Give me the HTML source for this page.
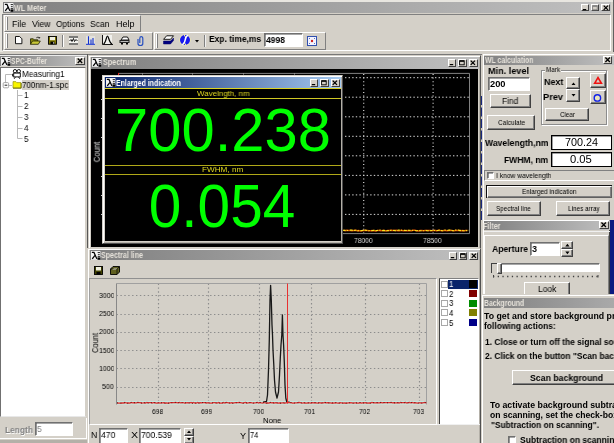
<!DOCTYPE html>
<html>
<head>
<meta charset="utf-8">
<title>WL Meter</title>
<style>
html,body{margin:0;padding:0;}
body{width:614px;height:443px;overflow:hidden;background:#d4d0c8;position:relative;font-family:"Liberation Sans",sans-serif;font-size:8.5px;color:#000;}
div,span{position:absolute;box-sizing:border-box;}
.t{white-space:nowrap;line-height:10px;height:10px;will-change:transform;}
.raised{border:1px solid;border-color:#fff #808080 #808080 #fff;background:#d4d0c8;}
.btn{border:1px solid;border-color:#fff #404040 #404040 #fff;background:#d4d0c8;box-shadow:inset -1px -1px 0 #808080;}
.inp{border:1px solid;border-color:#707070 #fff #fff #707070;background:#fff;box-shadow:inset 0.6px 0.6px 0 #505050;}
.tg{background:linear-gradient(90deg,#808080,#c0c0c0);}
.tb{background:linear-gradient(90deg,#0a246a,#a6caf0);}
.cb{border:1px solid;border-color:#fff #404040 #404040 #fff;background:#d4d0c8;}
.chk{border:1px solid;border-color:#707070 #fff #fff #707070;background:#fff;box-shadow:inset 0.6px 0.6px 0 #505050;}
.win{border:1px solid;border-color:#d4d0c8 #505050 #505050 #d4d0c8;background:#d4d0c8;box-shadow:inset 1px 1px 0 #fff,inset -1px -1px 0 #b4b0a8;}
svg{position:absolute;overflow:visible;}
</style>
</head>
<body>

<!-- main title -->
<div style="left:0;top:0;width:614px;height:2px;background:#e8e6e0;"></div><div style="left:0;top:0;width:2.5px;height:52px;background:#e8e6e0;"></div><div style="left:612.6px;top:0;width:1.4px;height:52px;background:#606060;"></div>
<div class="tg" style="left:2.8px;top:2.3px;width:607.8px;height:10.4px;"></div>
<svg style="left:3.8px;top:3px;" width="9.4" height="8.8" viewBox="0 0 9 10" preserveAspectRatio="none"><rect width="9" height="10" fill="#f4f4f4"/><path d="M0.8 1.6 L2.8 1.6 L5.6 9 M3.9 4.8 L1.2 9" stroke="#000" stroke-width="1.25" fill="none"/><path d="M6.4 1.8 h2.2 M6.6 4.2 h1.8 M6.4 6.4 h2.2" stroke="#000" stroke-width="0.9"/><rect x="6.2" y="7.3" width="2.8" height="2.7" fill="#000"/></svg>
<span class="t" style="left:13.87px;top:2.8px;font-size:8.3px;font-weight:bold;color:#e6e2da;transform-origin:0 50%;transform:scaleX(0.87);">WL Meter</span>
<div class="cb" style="left:580.8px;top:3.6px;width:8px;height:7.8px;"></div><div class="cb" style="left:590.6px;top:3.6px;width:8.5px;height:7.8px;"></div><div class="cb" style="left:601.1px;top:3.6px;width:9.4px;height:7.8px;"></div><svg style="left:580.8px;top:3.6px;" width="30" height="8"><path d="M1.8 5.6 H5.2" stroke="#000" stroke-width="1.2"/><rect x="11.6" y="1.8" width="4.6" height="4" fill="none" stroke="#808080" stroke-width="0.9"/><path d="M11.6 2.1 H16.2" stroke="#808080" stroke-width="1.4"/><path d="M22.7 1.6 L27 5.9 M27 1.6 L22.7 5.9" stroke="#000" stroke-width="1.3"/></svg>
<!-- menu and toolbars -->
<div style="left:2px;top:13.5px;width:608.7px;height:37.5px;border:1px solid;border-color:#808080 #fff #fff #808080;"></div>
<div class="raised" style="left:4px;top:15px;width:137px;height:17px;"></div>
<div style="left:6px;top:17px;width:2px;height:13px;border-left:1px solid #fff;border-right:1px solid #808080;"></div>
<span class="t" style="left:12.48px;top:18.8px;font-size:9px;transform-origin:0 50%;transform:scaleX(0.97);">File</span>
<span class="t" style="left:32.08px;top:18.8px;font-size:9px;transform-origin:0 50%;transform:scaleX(0.96);">View</span>
<span class="t" style="left:56.31px;top:18.8px;font-size:9px;transform-origin:0 50%;transform:scaleX(0.92);">Options</span>
<span class="t" style="left:90.49px;top:18.8px;font-size:9px;transform-origin:0 50%;transform:scaleX(0.95);">Scan</span>
<span class="t" style="left:115.86px;top:18.8px;font-size:9px;transform-origin:0 50%;transform:scaleX(1);">Help</span>
<div class="raised" style="left:4px;top:32px;width:149px;height:18px;"></div>
<div style="left:6px;top:34px;width:2px;height:14px;border-left:1px solid #fff;border-right:1px solid #808080;"></div>
<svg style="left:14.5px;top:35.8px;" width="8" height="8"><path d="M0.5 0.5 H4.6 L6.9 2.8 V7.7 H0.5 Z" fill="#fff" stroke="#000" stroke-width="0.9"/></svg>
<svg style="left:30px;top:35.5px;" width="11" height="9"><path d="M0.5 8.3 V2.8 H3.3 L4.2 3.8 H7.8 V5" fill="#8c8c10" stroke="#202000" stroke-width="0.8"/><path d="M0.5 8.3 L2.5 5 H10.3 L8.3 8.3 Z" fill="#c8c838" stroke="#202000" stroke-width="0.8"/><path d="M6.3 1.8 q1.8 -1.6 3.3 0.2 l0.2 -1 M9.6 2 l-1.1 0" stroke="#000" stroke-width="0.7" fill="none"/></svg>
<svg style="left:48px;top:36px;" width="9" height="9"><rect x="0.5" y="0.5" width="8" height="7.7" fill="#807800" stroke="#000" stroke-width="0.9"/><rect x="2" y="1" width="5" height="3.2" fill="#f0f0e0"/><rect x="2.5" y="5.6" width="4" height="2.6" fill="#000"/><rect x="5.2" y="6" width="1" height="1.8" fill="#c0c0c0"/></svg>
<div style="left:62px;top:35px;width:2px;height:12px;border-left:1px solid #808080;border-right:1px solid #fff;"></div>
<svg style="left:69px;top:36px;" width="9" height="9"><rect x="0" y="0" width="9" height="9" fill="#f4f4f0"/><path d="M0 1 H9 M0 8 H9" stroke="#000" stroke-width="1"/><path d="M0.5 5 L2 3.5 L3 5.5 L4.5 2.5 L5.5 5.5 L7 3.5 L8.5 5" stroke="#000" stroke-width="0.9" fill="none"/></svg>
<svg style="left:86px;top:36px;" width="9" height="9"><rect x="0" y="0" width="9" height="9" fill="#e4e2dc"/><path d="M2.5 0.3 V8 M5 3.5 V8 M7 2 V8" stroke="#1030d0" stroke-width="1.1"/><path d="M0 8.3 H9" stroke="#1030d0" stroke-width="1"/></svg>
<svg style="left:102px;top:35px;" width="11" height="10"><rect x="1" y="0" width="9" height="10" fill="#f0f0ec"/><path d="M0.5 0 V9.5 H11" stroke="#000" stroke-width="0.9" fill="none"/><path d="M1.5 9 C4 8 4.3 1 5.5 1 C6.7 1 7 8 10 9" stroke="#000" stroke-width="1.2" fill="none"/></svg>
<svg style="left:119px;top:36px;" width="11" height="9"><path d="M2 4 L4 1 H8.5 L10 4 Z" fill="#fff" stroke="#000" stroke-width="0.9"/><rect x="0.5" y="4" width="10" height="3" fill="#202020"/><path d="M1.5 5.5 H9.5" stroke="#fff" stroke-width="0.7"/><rect x="2" y="7" width="2" height="1.5" fill="#000"/><rect x="7" y="7" width="2" height="1.5" fill="#000"/></svg>
<svg style="left:137.3px;top:35.5px;" width="7" height="10"><path d="M1 3 V7.5 Q1 9.5 3.4 9.5 Q5.8 9.5 5.8 7.5 V2.5 Q5.8 0.7 4.2 0.7 Q2.8 0.7 2.8 2.5 V7" stroke="#2850c0" stroke-width="1.2" fill="none"/></svg>
<div class="raised" style="left:154px;top:32px;width:172px;height:17.5px;"></div>
<div style="left:156px;top:34px;width:2px;height:14px;border-left:1px solid #fff;border-right:1px solid #808080;"></div>
<svg style="left:162.5px;top:35px;" width="11" height="10"><path d="M0.5 9 H7.5 L10.5 5.5 V3 L7.5 6 H0.5 Z" fill="#000080" stroke="#000060" stroke-width="0.5"/><path d="M3.6 0.8 H10.5 L7.5 4.3 H0.6 Z" fill="#fff" stroke="#000" stroke-width="0.9"/></svg>
<svg style="left:178.6px;top:33.7px;" width="12" height="12"><circle cx="6" cy="6" r="5.6" fill="#f4f0a8"/><circle cx="6" cy="6" r="5" fill="#1818f0"/><path d="M8.8 1.2 C4.5 4 8 8 3.4 10.8" stroke="#fff" stroke-width="1.5" fill="none"/><path d="M5.2 1 L6.6 3.2 M6.8 11 L5.4 8.8" stroke="#f4f0a8" stroke-width="1" fill="none"/></svg>
<svg style="left:195px;top:40px;" width="4" height="3"><path d="M0 0 H4 L2 2.5 Z" fill="#000"/></svg>
<div style="left:204px;top:35px;width:2px;height:12px;border-left:1px solid #808080;border-right:1px solid #f0f0f0;"></div>
<span class="t" style="left:208.89px;top:33.7px;font-size:9.5px;font-weight:bold;transform-origin:0 50%;transform:scaleX(0.89);">Exp. time,ms</span>
<div class="inp" style="left:264px;top:33px;width:39px;height:14px;"></div>
<span class="t" style="left:266.49px;top:34.9px;font-size:9.2px;font-weight:bold;transform-origin:0 50%;transform:scaleX(0.93);">4998</span>
<svg style="left:307px;top:36px;" width="10" height="10"><rect x="0.5" y="0.5" width="9" height="9" fill="#f4f4ff" stroke="#3050b0" stroke-width="1"/><circle cx="5" cy="5" r="1.2" fill="#d02020"/><path d="M2 2 l1 1 M8 2 l-1 1 M2 8 l1 -1 M8 8 l-1 -1" stroke="#3050b0" stroke-width="0.8"/></svg>
<!-- SPC-Buffer panel -->
<div style="left:0;top:53.5px;width:482px;height:1px;background:#787878;"></div><div style="left:0;top:54.5px;width:87px;height:1px;background:#ececec;"></div>
<div class="tg" style="left:0;top:56px;width:86px;height:10px;"></div>
<svg style="left:0.8px;top:56.6px;" width="9.4" height="8.8" viewBox="0 0 9 10" preserveAspectRatio="none"><rect width="9" height="10" fill="#f4f4f4"/><path d="M0.8 1.6 L2.8 1.6 L5.6 9 M3.9 4.8 L1.2 9" stroke="#000" stroke-width="1.25" fill="none"/><path d="M6.4 1.8 h2.2 M6.6 4.2 h1.8 M6.4 6.4 h2.2" stroke="#000" stroke-width="0.9"/><rect x="6.2" y="7.3" width="2.8" height="2.7" fill="#000"/></svg>
<span class="t" style="left:10.9px;top:55.8px;font-size:8.3px;font-weight:bold;color:#e6e2da;transform-origin:0 50%;transform:scaleX(0.81);">SPC-Buffer</span>
<div class="cb" style="left:75px;top:57px;width:10px;height:8px;"></div><svg style="left:75px;top:57px;" width="10" height="8"><path d="M2.7 1.5 L7.2 6 M7.2 1.5 L2.7 6" stroke="#000" stroke-width="1.3"/></svg>
<div style="left:0;top:67px;width:86px;height:350px;background:#fff;border:1px solid;border-color:#707070 #d4d0c8 #e8e8e8 #707070;"></div>
<svg style="left:0;top:67px;" width="86" height="80">
 <path d="M5.5 16 V7.5 H12" stroke="#b8b8b8" stroke-width="1" fill="none"/>
 <path d="M9 18.5 H12" stroke="#b8b8b8" stroke-width="1" fill="none"/>
 <path d="M17.5 23 V71.5 H22.5" stroke="#b8b8b8" stroke-width="1" fill="none"/>
 <path d="M17.5 28.5 H22.5 M17.5 39.5 H22.5 M17.5 50.5 H22.5 M17.5 61.5 H22.5" stroke="#b8b8b8" stroke-width="1" fill="none"/>
 <rect x="3.2" y="15.6" width="5.4" height="5.2" rx="1" fill="#fff" stroke="#9c9c9c" stroke-width="0.9"/>
 <path d="M4.6 18.2 H7.3" stroke="#202020" stroke-width="1"/>
 <g transform="translate(0 0.8)">
 <circle cx="15" cy="3.4" r="1.7" fill="#fff" stroke="#000" stroke-width="0.9"/>
 <circle cx="18.8" cy="3.4" r="1.7" fill="#fff" stroke="#000" stroke-width="0.9"/>
 <rect x="13.7" y="5.3" width="6.6" height="3.8" fill="#fff" stroke="#000" stroke-width="0.9"/>
 <path d="M12.6 6 V8.6 M15.4 9.2 L14.2 11 M18.6 9.2 L19.8 11" stroke="#000" stroke-width="0.9"/>
 </g>
 <path d="M13 21 V14.6 H15.8 L16.8 15.6 H21 V21 Z" fill="#f8f400" stroke="#909020" stroke-width="0.7"/>
 <path d="M13 21.2 H21.2 V16" stroke="#606000" stroke-width="0.8" fill="none"/>
</svg>
<div style="left:21.5px;top:79.7px;width:47px;height:10.2px;background:#d4d0c8;"></div>
<span class="t" style="left:22.11px;top:69px;font-size:8.6px;transform-origin:0 50%;transform:scaleX(0.95);">Measuring1</span>
<span class="t" style="left:22.12px;top:79.8px;font-size:8.6px;transform-origin:0 50%;transform:scaleX(0.93);">700nm-1.spc</span>
<span class="t" style="left:24.33px;top:90.1px;font-size:8.6px;transform-origin:0 50%;transform:scaleX(0.91);">1</span>
<span class="t" style="left:24.33px;top:101px;font-size:8.6px;transform-origin:0 50%;transform:scaleX(0.91);">2</span>
<span class="t" style="left:24.33px;top:112px;font-size:8.6px;transform-origin:0 50%;transform:scaleX(0.91);">3</span>
<span class="t" style="left:24.33px;top:122.9px;font-size:8.6px;transform-origin:0 50%;transform:scaleX(0.91);">4</span>
<span class="t" style="left:24.33px;top:133.5px;font-size:8.6px;transform-origin:0 50%;transform:scaleX(0.91);">5</span>
<div style="left:0;top:418px;width:87px;height:21px;border-right:1px solid #fff;border-bottom:1px solid #fff;"></div>
<div style="left:0;top:439.5px;width:87px;height:4px;background:#b4b0a8;"></div>
<span class="t" style="left:4.5px;top:424.6px;font-size:8.8px;font-weight:bold;color:#808080;transform-origin:0 50%;transform:scaleX(0.95);text-shadow:0.7px 0.7px 0 #fff;">Length</span>
<div class="inp" style="left:35px;top:422px;width:38px;height:14px;"></div>
<span class="t" style="left:36.79px;top:424.3px;font-size:9px;color:#808080;transform-origin:0 50%;transform:scaleX(0.94);">5</span>
<!-- Spectrum window -->
<div style="left:87.2px;top:53.5px;width:1.1px;height:195px;background:#585858;"></div><div class="win" style="left:88.2px;top:54.9px;width:393.3px;height:195px;"></div>
<div class="tg" style="left:91px;top:57px;width:387.5px;height:12px;"></div>
<svg style="left:92.3px;top:58.4px;" width="9.4" height="8.8" viewBox="0 0 9 10" preserveAspectRatio="none"><rect width="9" height="10" fill="#f4f4f4"/><path d="M0.8 1.6 L2.8 1.6 L5.6 9 M3.9 4.8 L1.2 9" stroke="#000" stroke-width="1.25" fill="none"/><path d="M6.4 1.8 h2.2 M6.6 4.2 h1.8 M6.4 6.4 h2.2" stroke="#000" stroke-width="0.9"/><rect x="6.2" y="7.3" width="2.8" height="2.7" fill="#000"/></svg>
<span class="t" style="left:102.87px;top:57.3px;font-size:8.3px;font-weight:bold;color:#e6e2da;transform-origin:0 50%;transform:scaleX(0.87);">Spectrum</span>
<div class="cb" style="left:448.3px;top:59px;width:8px;height:7.8px;"></div><div class="cb" style="left:458.1px;top:59px;width:8.5px;height:7.8px;"></div><div class="cb" style="left:468.6px;top:59px;width:9.4px;height:7.8px;"></div><svg style="left:448.3px;top:59px;" width="30" height="8"><path d="M1.8 5.6 H5.2" stroke="#000" stroke-width="1.2"/><rect x="11.6" y="1.8" width="4.6" height="4" fill="none" stroke="#000" stroke-width="0.9"/><path d="M11.6 2.1 H16.2" stroke="#000" stroke-width="1.4"/><path d="M22.7 1.6 L27 5.9 M27 1.6 L22.7 5.9" stroke="#000" stroke-width="1.3"/></svg>
<div style="left:91.3px;top:69px;width:386.7px;height:178px;background:#000;"></div>
<svg style="left:0;top:0;" width="614" height="443">
 <path d="M118 73.4 H469.5 V233.6 H343" stroke="#909090" stroke-width="0.9" fill="none"/>
 <path d="M118.5 73 v2" stroke="#e02020" stroke-width="1"/>
 <path d="M142.5 73 v1.6 M192.5 73 v1.6 M243.5 73 v1.6 M294.5 73 v1.6" stroke="#909090" stroke-width="1"/>
 <path d="M345 77.7 H469 M345 97.2 H469 M345 116.8 H469 M345 136.3 H469 M345 155.8 H469 M345 175.4 H469 M345 194.9 H469 M345 214.4 H469 " stroke="#d8d8d8" stroke-width="1" stroke-dasharray="1.4 2.2" fill="none"/>
 <path d="M363.7 74 V233 M433.1 74 V233" stroke="#d8d8d8" stroke-width="1.2" stroke-dasharray="1 2.6" fill="none"/>
 <path d="M343.5 230.3 L345.2 230.7 L346.9 230.3 L348.6 230.4 L350.3 230.5 L352.0 230.7 L353.7 230.4 L355.4 230.3 L357.1 230.8 L358.8 230.5 L360.5 230.9 L362.2 230.8 L363.9 230.5 L365.6 230.6 L367.3 230.6 L369.0 230.7 L370.7 230.7 L372.4 230.6 L374.1 230.7 L375.8 230.9 L377.5 230.6 L379.2 230.6 L380.9 230.7 L382.6 230.4 L384.3 230.5 L386.0 230.9 L387.7 230.6 L389.4 230.6 L391.1 230.3 L392.8 230.5 L394.5 230.6 L396.2 230.3 L397.9 230.7 L399.6 230.7 L401.3 230.3 L403.0 230.7 L404.7 230.6 L406.4 230.7 L408.1 230.5 L409.8 230.7 L411.5 230.7 L413.2 230.3 L414.9 230.3 L416.6 230.7 L418.3 230.9 L420.0 230.5 L421.7 230.6 L423.4 230.7 L425.1 230.5 L426.8 230.5 L428.5 230.5 L430.2 230.5 L431.9 230.7 L433.6 230.5 L435.3 230.5 L437.0 230.8 L438.7 230.3 L440.4 230.6 L442.1 230.7 L443.8 230.5 L445.5 230.4 L447.2 230.8 L448.9 230.4 L450.6 230.4 L452.3 230.6 L454.0 230.7 L455.7 230.4 L457.4 230.5 L459.1 230.5 L460.8 230.8 L462.5 230.6 L464.2 230.8 L465.9 230.4 L467.6 230.5" stroke="#e05000" stroke-width="1.5" fill="none"/>
 <path d="M343.0 230.2 L344.5 230.4 L346.0 230.3 L347.5 230.5 L349.0 230.5 L350.5 230.1 L352.0 230.0 L353.5 230.7 L355.0 230.2 L356.5 230.2 L358.0 230.8 L359.5 230.4 L361.0 230.7 L362.5 230.4 L364.0 230.5 L365.5 230.1 L367.0 230.5 L368.5 230.7 L370.0 230.4 L371.5 230.6 L373.0 230.5 L374.5 230.1 L376.0 230.6 L377.5 230.5 L379.0 230.2 L380.5 230.0 L382.0 230.7 L383.5 230.4 L385.0 230.6 L386.5 230.7 L388.0 230.6 L389.5 230.7 L391.0 230.3 L392.5 230.6 L394.0 230.4 L395.5 230.7 L397.0 230.7 L398.5 230.1 L400.0 230.1 L401.5 230.2 L403.0 230.8 L404.5 230.3 L406.0 230.5 L407.5 230.2 L409.0 230.4 L410.5 230.3 L412.0 230.3 L413.5 230.5 L415.0 230.5 L416.5 230.7 L418.0 230.5 L419.5 230.7 L421.0 230.7 L422.5 230.8 L424.0 230.5 L425.5 230.1 L427.0 230.7 L428.5 230.8 L430.0 230.7 L431.5 230.5 L433.0 230.6 L434.5 230.2 L436.0 230.7 L437.5 230.5 L439.0 230.2 L440.5 230.1 L442.0 230.7 L443.5 230.8 L445.0 230.1 L446.5 230.6 L448.0 230.3 L449.5 230.1 L451.0 230.2 L452.5 230.6 L454.0 230.7 L455.5 230.0 L457.0 230.5 L458.5 230.0 L460.0 230.6 L461.5 230.3 L463.0 230.7 L464.5 230.8 L466.0 230.4 L467.5 230.8 L469.0 230.2" stroke="#f8e820" stroke-width="1.1" stroke-dasharray="2.6 1.2 1.4 1.6 3.2 1.1" fill="none"/>
 <path d="M101.5 80 v1 M101.5 99 v1 M101.5 118 v1 M101.5 137 v1 M101.5 176 v1 M101.5 195 v1 M101.5 214 v1" stroke="#d0d0d0" stroke-width="1"/>
</svg>
<span class="t" style="left:353.59px;top:235.7px;font-size:8px;color:#d8d8d8;transform-origin:0 50%;transform:scaleX(0.84);">78000</span>
<span class="t" style="left:422.99px;top:235.7px;font-size:8px;color:#d8d8d8;transform-origin:0 50%;transform:scaleX(0.84);">78500</span>
<span class="t" style="left:84.56px;top:146.9px;width:23.48px;font-size:8.8px;color:#e0e0e0;transform-origin:50% 50%;transform:rotate(-90deg) scaleX(0.87);">Count</span>
<!-- Enlarged indication window -->
<div class="win" style="left:102px;top:74.7px;width:241.4px;height:169px;"></div>
<div class="tb" style="left:105px;top:77px;width:236px;height:11px;"></div>
<svg style="left:105.9px;top:78.1px;" width="9.4" height="8.8" viewBox="0 0 9 10" preserveAspectRatio="none"><rect width="9" height="10" fill="#f4f4f4"/><path d="M0.8 1.6 L2.8 1.6 L5.6 9 M3.9 4.8 L1.2 9" stroke="#000" stroke-width="1.25" fill="none"/><path d="M6.4 1.8 h2.2 M6.6 4.2 h1.8 M6.4 6.4 h2.2" stroke="#000" stroke-width="0.9"/><rect x="6.2" y="7.3" width="2.8" height="2.7" fill="#000"/></svg>
<span class="t" style="left:116.38px;top:77.5px;font-size:8.3px;font-weight:bold;color:#fff;transform-origin:0 50%;transform:scaleX(0.84);">Enlarged indication</span>
<div class="cb" style="left:310.2px;top:78.9px;width:8px;height:7.8px;"></div><div class="cb" style="left:320.0px;top:78.9px;width:8.5px;height:7.8px;"></div><div class="cb" style="left:330.5px;top:78.9px;width:9.4px;height:7.8px;"></div><svg style="left:310.2px;top:78.9px;" width="30" height="8"><path d="M1.8 5.6 H5.2" stroke="#000" stroke-width="1.2"/><rect x="11.6" y="1.8" width="4.6" height="4" fill="none" stroke="#000" stroke-width="0.9"/><path d="M11.6 2.1 H16.2" stroke="#000" stroke-width="1.4"/><path d="M22.7 1.6 L27 5.9 M27 1.6 L22.7 5.9" stroke="#000" stroke-width="1.3"/></svg>
<div style="left:105px;top:88px;width:236px;height:153.3px;background:#000;"></div>
<div style="left:105px;top:88.1px;width:236px;height:11px;border-top:1.5px solid #dcd428;border-bottom:1.2px solid #d0c824;"></div>
<div style="left:105px;top:164.5px;width:236px;height:10.5px;border-top:1px solid #b0a818;border-bottom:1px solid #b0a818;"></div>
<span class="t" style="left:196.73px;top:88.8px;font-size:8px;color:#e0d820;transform-origin:0 50%;transform:scaleX(0.99);">Wavelngth, nm</span>
<span class="t" style="left:202.21px;top:164.7px;font-size:8px;color:#e0d820;transform-origin:0 50%;transform:scaleX(1.02);">FWHM, nm</span>
<span style="transform:scale(0.995,1.015);left:103.6px;top:97.5px;width:238px;height:66px;line-height:66px;text-align:center;color:#00ff00;font-size:60px;white-space:nowrap;">700.238</span>
<span style="transform:scale(0.976,1.015);left:103.2px;top:174.7px;width:238px;height:64px;line-height:64px;text-align:center;color:#00ff00;font-size:60px;white-space:nowrap;">0.054</span>
<!-- Spectral line window -->
<div class="win" style="left:86.7px;top:247.5px;width:394.8px;height:200px;"></div>
<div class="tg" style="left:89.6px;top:250.2px;width:389px;height:10.1px;"></div>
<svg style="left:90.8px;top:250.9px;" width="9.4" height="8.8" viewBox="0 0 9 10" preserveAspectRatio="none"><rect width="9" height="10" fill="#f4f4f4"/><path d="M0.8 1.6 L2.8 1.6 L5.6 9 M3.9 4.8 L1.2 9" stroke="#000" stroke-width="1.25" fill="none"/><path d="M6.4 1.8 h2.2 M6.6 4.2 h1.8 M6.4 6.4 h2.2" stroke="#000" stroke-width="0.9"/><rect x="6.2" y="7.3" width="2.8" height="2.7" fill="#000"/></svg>
<span class="t" style="left:100.98px;top:250.4px;font-size:8.3px;font-weight:bold;color:#e6e2da;transform-origin:0 50%;transform:scaleX(0.85);">Spectral line</span>
<div class="cb" style="left:448.8px;top:252.2px;width:8px;height:7.8px;"></div><div class="cb" style="left:458.6px;top:252.2px;width:8.5px;height:7.8px;"></div><div class="cb" style="left:469.1px;top:252.2px;width:9.4px;height:7.8px;"></div><svg style="left:448.8px;top:252.2px;" width="30" height="8"><path d="M1.8 5.6 H5.2" stroke="#000" stroke-width="1.2"/><rect x="11.6" y="1.8" width="4.6" height="4" fill="none" stroke="#000" stroke-width="0.9"/><path d="M11.6 2.1 H16.2" stroke="#000" stroke-width="1.4"/><path d="M22.7 1.6 L27 5.9 M27 1.6 L22.7 5.9" stroke="#000" stroke-width="1.3"/></svg>
<svg style="left:94px;top:266px;" width="9" height="9"><rect x="0.5" y="0.5" width="8" height="8" fill="#404000" stroke="#000" stroke-width="0.9"/><rect x="2" y="1" width="5" height="3.5" fill="#f0f0e0"/><rect x="2.5" y="6" width="4" height="2.5" fill="#000"/></svg>
<svg style="left:110px;top:266px;" width="10" height="9"><path d="M0.5 3 L3 0.5 H9.5 V6 L7 8.5 H0.5 Z" fill="#606020" stroke="#000" stroke-width="0.9"/><path d="M2 4 L4 2 H8 L6 4 Z" fill="#e0e0b0"/><path d="M0.5 3 H7 L9.5 0.5 M7 3 V8.5" stroke="#000" stroke-width="0.7" fill="none"/></svg>
<div style="left:89px;top:278px;width:348px;height:147.3px;border-top:1px solid #909090;border-left:1px solid #a0a0a0;border-right:1px solid #fff;border-bottom:1px solid #fff;"></div>
<svg style="left:0;top:0;" width="614" height="443">
 <path d="M116.5 295.5 H426.5 M116.5 314.5 H426.5 M116.5 332.5 H426.5 M116.5 350.5 H426.5 M116.5 368.5 H426.5 M116.5 387.5 H426.5 " stroke="#8c8c8c" stroke-width="1.15" stroke-dasharray="1.4 2.5" fill="none"/>
 <path d="M158.5 283.5 V404.5 M208.5 283.5 V404.5 M259.5 283.5 V404.5 M311.5 283.5 V404.5 M365.5 283.5 V404.5 M419.5 283.5 V404.5 " stroke="#8c8c8c" stroke-width="1.15" stroke-dasharray="1.4 2.5" fill="none"/>
 <path d="M116.5 283.5 H426.5 V404.5" stroke="#a0a0a0" stroke-width="1" fill="none"/>
 <path d="M116.5 283.5 V404.5" stroke="#888888" stroke-width="1" fill="none"/>
 <path d="M117.0 401.5 H426.0 M117.0 404.1 H426.0" stroke="#c4e8e0" stroke-width="1" fill="none"/>
 <path d="M263 402.2 L266.5 401.5 L267.5 395 L268.5 370 L269.3 340 L270 300 L270.6 285.4 L271.3 300 L272 325 L272.5 335 L273 350 L273.8 365 L274.5 380 L275.5 392 L277 398 L278.5 392 L279.5 375 L280.3 358 L281 345 L281.8 335 L282.4 314.8 L283 335 L283.6 345 L284.3 362 L285 385 L285.8 398 L286.8 402 L290 402.3" stroke="#181818" stroke-width="1.3" fill="none" stroke-linejoin="round"/>
 <path d="M117.0 402.9 L118.3 403.0 L119.6 403.0 L120.9 403.1 L122.2 403.0 L123.5 403.1 L124.8 402.5 L126.1 402.8 L127.4 403.1 L128.7 402.9 L130.0 403.1 L131.3 402.5 L132.6 402.8 L133.9 402.6 L135.2 402.8 L136.5 402.9 L137.8 402.5 L139.1 402.6 L140.4 402.6 L141.7 403.1 L143.0 403.0 L144.3 402.6 L145.6 403.0 L146.9 402.5 L148.2 402.9 L149.5 402.5 L150.8 402.5 L152.1 403.1 L153.4 402.6 L154.7 402.6 L156.0 403.1 L157.3 403.1 L158.6 402.7 L159.9 403.1 L161.2 402.8 L162.5 402.9 L163.8 402.6 L165.1 403.1 L166.4 402.9 L167.7 403.1 L169.0 403.1 L170.3 402.7 L171.6 402.7 L172.9 402.6 L174.2 402.6 L175.5 402.5 L176.8 402.7 L178.1 402.9 L179.4 402.5 L180.7 402.9 L182.0 402.7 L183.3 402.7 L184.6 403.0 L185.9 402.8 L187.2 402.7 L188.5 402.8 L189.8 402.9 L191.1 402.5 L192.4 403.1 L193.7 402.5 L195.0 403.0 L196.3 403.0 L197.6 402.5 L198.9 403.0 L200.2 402.7 L201.5 402.9 L202.8 402.5 L204.1 402.5 L205.4 402.6 L206.7 403.1 L208.0 402.6 L209.3 403.0 L210.6 403.1 L211.9 403.1 L213.2 402.7 L214.5 402.7 L215.8 402.8 L217.1 403.0 L218.4 402.5 L219.7 403.0 L221.0 403.0 L222.3 403.1 L223.6 402.5 L224.9 403.1 L226.2 402.5 L227.5 402.7 L228.8 402.9 L230.1 403.1 L231.4 402.7 L232.7 403.1 L234.0 402.8 L235.3 402.7 L236.6 402.7 L237.9 402.6 L239.2 402.5 L240.5 402.6 L241.8 402.9 L243.1 403.1 L244.4 402.6 L245.7 402.5 L247.0 403.1 L248.3 402.8 L249.6 402.7 L250.9 402.6 L252.2 402.9 L253.5 403.0 L254.8 402.8 L256.1 402.7 L257.4 402.5 L258.7 403.1 L260.0 402.5 L261.3 402.8 L262.6 403.0 L263.9 402.5 L265.2 403.0 L266.5 403.1 L267.8 402.9 L269.1 403.0 L270.4 402.5 L271.7 402.8 L273.0 402.6 L274.3 403.0 L275.6 402.7 L276.9 402.8 L278.2 403.1 L279.5 403.0 L280.8 403.1 L282.1 402.8 L283.4 402.8 L284.7 403.0 L286.0 402.8 L287.3 402.7 L288.6 402.7 L289.9 402.6 L291.2 402.7 L292.5 403.1 L293.8 403.1 L295.1 402.9 L296.4 402.8 L297.7 402.7 L299.0 402.5 L300.3 402.6 L301.6 403.0 L302.9 403.1 L304.2 402.7 L305.5 403.0 L306.8 403.0 L308.1 402.9 L309.4 402.9 L310.7 403.0 L312.0 402.7 L313.3 402.9 L314.6 402.6 L315.9 402.8 L317.2 403.0 L318.5 402.9 L319.8 402.7 L321.1 403.1 L322.4 402.9 L323.7 402.9 L325.0 402.5 L326.3 402.8 L327.6 402.6 L328.9 402.9 L330.2 402.8 L331.5 403.0 L332.8 402.9 L334.1 403.0 L335.4 402.7 L336.7 402.9 L338.0 403.0 L339.3 403.0 L340.6 402.7 L341.9 403.0 L343.2 403.1 L344.5 402.9 L345.8 403.1 L347.1 403.1 L348.4 402.8 L349.7 402.8 L351.0 402.6 L352.3 403.0 L353.6 403.1 L354.9 402.8 L356.2 402.9 L357.5 403.0 L358.8 403.0 L360.1 402.6 L361.4 403.0 L362.7 402.9 L364.0 402.9 L365.3 402.7 L366.6 402.9 L367.9 403.0 L369.2 402.9 L370.5 403.0 L371.8 402.5 L373.1 402.6 L374.4 402.8 L375.7 402.9 L377.0 402.6 L378.3 402.9 L379.6 402.9 L380.9 402.5 L382.2 402.8 L383.5 402.6 L384.8 402.5 L386.1 402.5 L387.4 402.7 L388.7 402.6 L390.0 402.6 L391.3 402.5 L392.6 402.8 L393.9 402.7 L395.2 402.9 L396.5 402.9 L397.8 402.6 L399.1 403.1 L400.4 402.5 L401.7 402.7 L403.0 402.6 L404.3 402.7 L405.6 402.5 L406.9 403.0 L408.2 402.7 L409.5 402.5 L410.8 402.9 L412.1 402.5 L413.4 402.8 L414.7 402.7 L416.0 402.9 L417.3 403.1 L418.6 403.0 L419.9 402.7 L421.2 403.0 L422.5 402.9 L423.8 402.7 L425.1 402.5 L426.4 402.9" stroke="#e03030" stroke-width="1.25" fill="none"/>
 <path d="M117.0 402.9 L118.3 403.0 L119.6 403.0 L120.9 403.1 L122.2 403.0 L123.5 403.1 L124.8 402.5 L126.1 402.8 L127.4 403.1 L128.7 402.9 L130.0 403.1 L131.3 402.5 L132.6 402.8 L133.9 402.6 L135.2 402.8 L136.5 402.9 L137.8 402.5 L139.1 402.6 L140.4 402.6 L141.7 403.1 L143.0 403.0 L144.3 402.6 L145.6 403.0 L146.9 402.5 L148.2 402.9 L149.5 402.5 L150.8 402.5 L152.1 403.1 L153.4 402.6 L154.7 402.6 L156.0 403.1 L157.3 403.1 L158.6 402.7 L159.9 403.1 L161.2 402.8 L162.5 402.9 L163.8 402.6 L165.1 403.1 L166.4 402.9 L167.7 403.1 L169.0 403.1 L170.3 402.7 L171.6 402.7 L172.9 402.6 L174.2 402.6 L175.5 402.5 L176.8 402.7 L178.1 402.9 L179.4 402.5 L180.7 402.9 L182.0 402.7 L183.3 402.7 L184.6 403.0 L185.9 402.8 L187.2 402.7 L188.5 402.8 L189.8 402.9 L191.1 402.5 L192.4 403.1 L193.7 402.5 L195.0 403.0 L196.3 403.0 L197.6 402.5 L198.9 403.0 L200.2 402.7 L201.5 402.9 L202.8 402.5 L204.1 402.5 L205.4 402.6 L206.7 403.1 L208.0 402.6 L209.3 403.0 L210.6 403.1 L211.9 403.1 L213.2 402.7 L214.5 402.7 L215.8 402.8 L217.1 403.0 L218.4 402.5 L219.7 403.0 L221.0 403.0 L222.3 403.1 L223.6 402.5 L224.9 403.1 L226.2 402.5 L227.5 402.7 L228.8 402.9 L230.1 403.1 L231.4 402.7 L232.7 403.1 L234.0 402.8 L235.3 402.7 L236.6 402.7 L237.9 402.6 L239.2 402.5 L240.5 402.6 L241.8 402.9 L243.1 403.1 L244.4 402.6 L245.7 402.5 L247.0 403.1 L248.3 402.8 L249.6 402.7 L250.9 402.6 L252.2 402.9 L253.5 403.0 L254.8 402.8 L256.1 402.7 L257.4 402.5 L258.7 403.1 L260.0 402.5 L261.3 402.8 L262.6 403.0 L263.9 402.5 L265.2 403.0 L266.5 403.1 L267.8 402.9 L269.1 403.0 L270.4 402.5 L271.7 402.8 L273.0 402.6 L274.3 403.0 L275.6 402.7 L276.9 402.8 L278.2 403.1 L279.5 403.0 L280.8 403.1 L282.1 402.8 L283.4 402.8 L284.7 403.0 L286.0 402.8 L287.3 402.7 L288.6 402.7 L289.9 402.6 L291.2 402.7 L292.5 403.1 L293.8 403.1 L295.1 402.9 L296.4 402.8 L297.7 402.7 L299.0 402.5 L300.3 402.6 L301.6 403.0 L302.9 403.1 L304.2 402.7 L305.5 403.0 L306.8 403.0 L308.1 402.9 L309.4 402.9 L310.7 403.0 L312.0 402.7 L313.3 402.9 L314.6 402.6 L315.9 402.8 L317.2 403.0 L318.5 402.9 L319.8 402.7 L321.1 403.1 L322.4 402.9 L323.7 402.9 L325.0 402.5 L326.3 402.8 L327.6 402.6 L328.9 402.9 L330.2 402.8 L331.5 403.0 L332.8 402.9 L334.1 403.0 L335.4 402.7 L336.7 402.9 L338.0 403.0 L339.3 403.0 L340.6 402.7 L341.9 403.0 L343.2 403.1 L344.5 402.9 L345.8 403.1 L347.1 403.1 L348.4 402.8 L349.7 402.8 L351.0 402.6 L352.3 403.0 L353.6 403.1 L354.9 402.8 L356.2 402.9 L357.5 403.0 L358.8 403.0 L360.1 402.6 L361.4 403.0 L362.7 402.9 L364.0 402.9 L365.3 402.7 L366.6 402.9 L367.9 403.0 L369.2 402.9 L370.5 403.0 L371.8 402.5 L373.1 402.6 L374.4 402.8 L375.7 402.9 L377.0 402.6 L378.3 402.9 L379.6 402.9 L380.9 402.5 L382.2 402.8 L383.5 402.6 L384.8 402.5 L386.1 402.5 L387.4 402.7 L388.7 402.6 L390.0 402.6 L391.3 402.5 L392.6 402.8 L393.9 402.7 L395.2 402.9 L396.5 402.9 L397.8 402.6 L399.1 403.1 L400.4 402.5 L401.7 402.7 L403.0 402.6 L404.3 402.7 L405.6 402.5 L406.9 403.0 L408.2 402.7 L409.5 402.5 L410.8 402.9 L412.1 402.5 L413.4 402.8 L414.7 402.7 L416.0 402.9 L417.3 403.1 L418.6 403.0 L419.9 402.7 L421.2 403.0 L422.5 402.9 L423.8 402.7 L425.1 402.5 L426.4 402.9" stroke="#601010" stroke-width="1.1" stroke-dasharray="0.9 2.6" fill="none"/>
 <path d="M287.5 283.5 V403.5" stroke="#e83030" stroke-width="1" fill="none"/>
</svg>
<span class="t" style="left:98.68px;top:290.6px;font-size:7.6px;transform-origin:0 50%;transform:scaleX(0.91);">3000</span>
<span class="t" style="left:98.68px;top:309.1px;font-size:7.6px;transform-origin:0 50%;transform:scaleX(0.91);">2500</span>
<span class="t" style="left:98.68px;top:327.1px;font-size:7.6px;transform-origin:0 50%;transform:scaleX(0.91);">2000</span>
<span class="t" style="left:98.68px;top:345.8px;font-size:7.6px;transform-origin:0 50%;transform:scaleX(0.91);">1500</span>
<span class="t" style="left:98.68px;top:363.8px;font-size:7.6px;transform-origin:0 50%;transform:scaleX(0.91);">1000</span>
<span class="t" style="left:102.38px;top:382.4px;font-size:7.6px;transform-origin:0 50%;transform:scaleX(0.93);">500</span>
<span class="t" style="left:152px;top:406.8px;font-size:7.6px;transform-origin:0 50%;transform:scaleX(0.88);">698</span>
<span class="t" style="left:201.3px;top:406.8px;font-size:7.6px;transform-origin:0 50%;transform:scaleX(0.88);">699</span>
<span class="t" style="left:253.1px;top:406.8px;font-size:7.6px;transform-origin:0 50%;transform:scaleX(0.88);">700</span>
<span class="t" style="left:304.4px;top:406.8px;font-size:7.6px;transform-origin:0 50%;transform:scaleX(0.88);">701</span>
<span class="t" style="left:359px;top:406.8px;font-size:7.6px;transform-origin:0 50%;transform:scaleX(0.88);">702</span>
<span class="t" style="left:413.4px;top:406.8px;font-size:7.6px;transform-origin:0 50%;transform:scaleX(0.88);">703</span>
<span class="t" style="left:263.44px;top:416.2px;font-size:7.8px;transform-origin:0 50%;transform:scaleX(0.98);">None</span>
<span class="t" style="left:83.92px;top:337.8px;width:22.36px;font-size:8.4px;transform-origin:50% 50%;transform:rotate(-90deg) scaleX(0.89);">Count</span>
<div style="left:439px;top:278px;width:40px;height:147px;background:#fff;border:1px solid;border-color:#808080 #fff #fff #404040;"></div>
<div style="left:448.3px;top:279.5px;width:29.4px;height:9.3px;background:#0a246a;"></div>
<div style="left:469.4px;top:279.5px;width:7.6px;height:8.8px;background:#000;"></div>
<div style="left:469.4px;top:290.2px;width:7.6px;height:6.9px;background:#800000;"></div>
<div style="left:469.4px;top:299.8px;width:7.6px;height:6.9px;background:#008c00;"></div>
<div style="left:469.4px;top:309.3px;width:7.6px;height:6.9px;background:#808000;"></div>
<div style="left:469.4px;top:319.1px;width:7.6px;height:6.9px;background:#000088;"></div>
<div style="left:441px;top:280.79999999999995px;width:6.6px;height:6.8px;border:1px solid #a8a8a8;background:#fff;"></div>
<span class="t" style="left:448.82px;top:279.4px;font-size:9.6px;color:#fff;transform-origin:0 50%;transform:scaleX(0.83);">1</span>
<div style="left:441px;top:290.29999999999995px;width:6.6px;height:6.8px;border:1px solid #a8a8a8;background:#fff;"></div>
<span class="t" style="left:448.82px;top:288.9px;font-size:9.6px;transform-origin:0 50%;transform:scaleX(0.83);">2</span>
<div style="left:441px;top:299.79999999999995px;width:6.6px;height:6.8px;border:1px solid #a8a8a8;background:#fff;"></div>
<span class="t" style="left:448.82px;top:298.4px;font-size:9.6px;transform-origin:0 50%;transform:scaleX(0.83);">3</span>
<div style="left:441px;top:309.4px;width:6.6px;height:6.8px;border:1px solid #a8a8a8;background:#fff;"></div>
<span class="t" style="left:448.82px;top:308px;font-size:9.6px;transform-origin:0 50%;transform:scaleX(0.83);">4</span>
<div style="left:441px;top:318.9px;width:6.6px;height:6.8px;border:1px solid #a8a8a8;background:#fff;"></div>
<span class="t" style="left:448.82px;top:317.5px;font-size:9.6px;transform-origin:0 50%;transform:scaleX(0.83);">5</span>
<div style="left:437px;top:424.3px;width:43px;height:1px;background:#f0f0f0;"></div>
<span class="t" style="left:90.98px;top:430.3px;font-size:9px;transform-origin:0 50%;transform:scaleX(0.96);">N</span>
<div class="inp" style="left:98.7px;top:428px;width:29.3px;height:16px;"></div>
<span class="t" style="left:101.08px;top:430.3px;font-size:9.2px;transform-origin:0 50%;transform:scaleX(0.94);">470</span>
<span class="t" style="left:131.37px;top:430.3px;font-size:9px;transform-origin:0 50%;transform:scaleX(1.18);">X</span>
<div class="inp" style="left:138.8px;top:428px;width:42px;height:16px;"></div>
<span class="t" style="left:140.79px;top:430.3px;font-size:9.2px;transform-origin:0 50%;transform:scaleX(0.93);">700.539</span>
<div class="btn" style="left:183.7px;top:428px;width:10px;height:7.5px;"></div>
<div class="btn" style="left:183.7px;top:435.5px;width:10px;height:8px;"></div>
<svg style="left:183.7px;top:428px;" width="10" height="15"><path d="M3 5 L5 2.5 L7 5 Z M3 10 L5 12.5 L7 10 Z" fill="#000"/></svg>
<span class="t" style="left:240.45px;top:430.5px;font-size:9px;transform-origin:0 50%;transform:scaleX(1.01);">Y</span>
<div class="inp" style="left:248px;top:428px;width:40.6px;height:16px;"></div>
<span class="t" style="left:250.35px;top:430.3px;font-size:9.2px;transform-origin:0 50%;transform:scaleX(0.82);">74</span>
<!-- WL calculation panel -->
<svg style="left:481px;top:96px;" width="1" height="126"><path d="M0.5 0 V126" stroke="#18287c" stroke-width="1" stroke-dasharray="9 2.5"/></svg>
<div style="left:483px;top:54px;width:131px;height:167px;background:#d4d0c8;border-left:1px solid #fff;border-top:1px solid #fff;"></div>
<div class="tg" style="left:484px;top:55.5px;width:130px;height:9.3px;"></div>
<span class="t" style="left:484.98px;top:55.3px;font-size:8.3px;font-weight:bold;color:#e6e2da;transform-origin:0 50%;transform:scaleX(0.83);">WL calculation</span>
<div class="cb" style="left:602.8px;top:56.2px;width:9.4px;height:8px;"></div><svg style="left:602.8px;top:56.2px;" width="9.4" height="8"><path d="M2.4000000000000004 1.5 L6.9 6 M6.9 1.5 L2.4000000000000004 6" stroke="#000" stroke-width="1.3"/></svg>
<span class="t" style="left:488.25px;top:66px;font-size:9.6px;font-weight:bold;transform-origin:0 50%;transform:scaleX(0.95);">Min. level</span>
<div class="inp" style="left:488px;top:77px;width:42px;height:14px;"></div>
<span class="t" style="left:489.84px;top:79.3px;font-size:9.3px;font-weight:bold;transform-origin:0 50%;transform:scaleX(1);">200</span>
<div class="btn" style="left:489.5px;top:94.3px;width:41px;height:14.2px;"></div>
<span class="t" style="left:502px;top:95.8px;font-size:8.8px;transform-origin:0 50%;transform:scaleX(0.95);">Find</span>
<div class="btn" style="left:487px;top:115.4px;width:48px;height:14.4px;"></div>
<span class="t" style="left:497.51px;top:117.5px;font-size:8px;transform-origin:0 50%;transform:scaleX(0.81);">Calculate</span>
<div style="left:540.8px;top:69.5px;width:66.7px;height:55.3px;border:1px solid #8c8c8c;box-shadow:1px 1px 0 #fff, inset 1px 1px 0 #fff;"></div>
<div style="left:544.5px;top:68px;width:16.5px;height:5px;background:#d4d0c8;"></div>
<span class="t" style="left:545.62px;top:65.2px;font-size:7.6px;transform-origin:0 50%;transform:scaleX(0.84);">Mark</span>
<span class="t" style="left:544.17px;top:77.4px;font-size:9.6px;font-weight:bold;transform-origin:0 50%;transform:scaleX(0.93);">Next</span>
<span class="t" style="left:543.45px;top:92.2px;font-size:9.6px;font-weight:bold;transform-origin:0 50%;transform:scaleX(0.96);">Prev</span>
<div class="btn" style="left:565.6px;top:77px;width:14.5px;height:12.4px;"></div>
<div class="btn" style="left:565.6px;top:89.4px;width:14.5px;height:12.6px;"></div>
<svg style="left:565.6px;top:77px;" width="15" height="25"><path d="M5.5 8 L7.5 5.5 L9.5 8 Z M5.5 17 L7.5 19.5 L9.5 17 Z" fill="#000"/></svg>
<div class="btn" style="left:590.4px;top:73.2px;width:15.3px;height:14.5px;"></div>
<div class="btn" style="left:590.4px;top:90px;width:15.3px;height:14.4px;"></div>
<svg style="left:590.4px;top:72.8px;" width="16" height="33"><path d="M4.6 10.3 L8 4.6 L11.4 10.3 Z" fill="none" stroke="#f01010" stroke-width="1.6"/><circle cx="7.4" cy="24.9" r="3.2" fill="#e8e4c0" stroke="#1020e8" stroke-width="1.4"/></svg>
<div class="btn" style="left:545.4px;top:107.5px;width:43.6px;height:13.6px;"></div>
<span class="t" style="left:560.22px;top:110px;font-size:8px;transform-origin:0 50%;transform:scaleX(0.78);">Clear</span>
<span class="t" style="left:484.88px;top:137.8px;font-size:9.6px;font-weight:bold;transform-origin:0 50%;transform:scaleX(0.9);">Wavelength,nm</span>
<div style="left:550.8px;top:135.3px;width:61.4px;height:14.4px;background:#fff;border:1px solid #000;box-shadow:inset 0.5px 0.5px 0 #404040;"></div>
<span class="t" style="left:564.55px;top:136.8px;font-size:10.5px;transform-origin:0 50%;transform:scaleX(1.03);">700.24</span>
<span class="t" style="left:504.29px;top:154.9px;font-size:9.6px;font-weight:bold;transform-origin:0 50%;transform:scaleX(0.89);">FWHM, nm</span>
<div style="left:550.8px;top:152.4px;width:61.4px;height:14.4px;background:#fff;border:1px solid #000;box-shadow:inset 0.5px 0.5px 0 #404040;"></div>
<span class="t" style="left:570.23px;top:153.9px;font-size:10.5px;transform-origin:0 50%;transform:scaleX(1.07);">0.05</span>
<div style="left:484.3px;top:170px;width:131px;height:11.2px;border:1px solid;border-color:#808080 #fff #fff #808080;"></div>
<div class="chk" style="left:486.5px;top:171.7px;width:7.2px;height:7.6px;"></div>
<span class="t" style="left:496.4px;top:171.1px;font-size:8px;transform-origin:0 50%;transform:scaleX(0.84);">I know wavelength</span>
<div style="left:485.9px;top:184.7px;width:126.6px;height:13.8px;border:0.8px solid #101010;"></div>
<div class="btn" style="left:486.7px;top:185.5px;width:125px;height:12.2px;border-color:#fff #606060 #606060 #fff;"></div>
<span class="t" style="left:521.52px;top:187.1px;font-size:8px;transform-origin:0 50%;transform:scaleX(0.8);">Enlarged indication</span>
<div class="btn" style="left:487.2px;top:201.4px;width:53.6px;height:14.3px;"></div>
<span class="t" style="left:496.42px;top:203.5px;font-size:8px;transform-origin:0 50%;transform:scaleX(0.79);">Spectral line</span>
<div class="btn" style="left:556px;top:201.4px;width:54px;height:14.3px;"></div>
<span class="t" style="left:567.82px;top:203.5px;font-size:8px;transform-origin:0 50%;transform:scaleX(0.8);">Lines array</span>
<!-- Filter panel -->
<div style="left:610px;top:220px;width:4px;height:76px;background:#0a1a80;"></div>
<div style="left:482.5px;top:219.5px;width:127.5px;height:77px;background:#d4d0c8;border-left:1px solid #fff;border-top:1px solid #fff;border-right:1px solid #404040;"></div>
<div class="tg" style="left:483.5px;top:221px;width:126px;height:9px;"></div>
<span class="t" style="left:483.17px;top:220.5px;font-size:8.3px;font-weight:bold;color:#e6e2da;transform-origin:0 50%;transform:scaleX(0.86);">Filter</span>
<div class="cb" style="left:599px;top:221.4px;width:9.5px;height:8px;"></div><svg style="left:599px;top:221.4px;" width="9.5" height="8"><path d="M2.45 1.5 L6.95 6 M6.95 1.5 L2.45 6" stroke="#000" stroke-width="1.3"/></svg>
<div style="left:483.5px;top:231px;width:126px;height:1px;background:#f0f0f0;"></div><div style="left:484px;top:234.8px;width:124.8px;height:63px;border-top:1px solid #fff;border-left:1px solid #fff;border-right:1px solid #808080;"></div>
<span class="t" style="left:491.68px;top:244.2px;font-size:9.6px;font-weight:bold;transform-origin:0 50%;transform:scaleX(0.9);">Aperture</span>
<div class="inp" style="left:530px;top:242.4px;width:30.3px;height:14px;"></div>
<span class="t" style="left:531.56px;top:244.4px;font-size:9.3px;font-weight:bold;transform-origin:0 50%;transform:scaleX(0.96);">3</span>
<div class="btn" style="left:560.5px;top:240.8px;width:12.6px;height:8px;"></div>
<div class="btn" style="left:560.5px;top:248.8px;width:12.6px;height:8px;"></div>
<svg style="left:560.5px;top:240.8px;" width="13" height="16"><path d="M4.3 5.4 L6.4 2.8 L8.5 5.4 Z M4.3 10.6 L6.4 13.2 L8.5 10.6 Z" fill="#000"/></svg>
<div class="inp" style="left:491px;top:263.3px;width:109px;height:8.8px;"></div>
<div style="left:491px;top:262.5px;width:5.5px;height:10px;background:#d4d0c8;border-top:1px solid #404040;border-left:1px solid #404040;"></div>
<div class="btn" style="left:496.5px;top:262.5px;width:5px;height:11.5px;"></div>
<svg style="left:493px;top:275px;" width="106" height="3"><path d="M0.5 0 V2.5 M105 0 V2.5" stroke="#404040" stroke-width="1"/><path d="M0 1.500 H106" stroke="#404040" stroke-width="1.5" stroke-dasharray="1.3 3.4"/></svg>
<div class="btn" style="left:524.2px;top:281.5px;width:46px;height:16px;"></div>
<span class="t" style="left:537.79px;top:284.1px;font-size:9px;transform-origin:0 50%;transform:scaleX(0.94);">Look</span>
<!-- Background window -->
<div style="left:482px;top:295.2px;width:140px;height:150px;border:1px solid;border-color:#fff #404040 #404040 #fff;background:#d4d0c8;box-shadow:-1px -1px 0 #d4d0c8;"></div>
<div class="tg" style="left:484px;top:297.6px;width:200px;height:10px;"></div>
<span class="t" style="left:483.89px;top:297.5px;font-size:8.3px;font-weight:bold;color:#e6e2da;transform-origin:0 50%;transform:scaleX(0.83);">Background</span>
<span class="t" style="left:484.38px;top:310.7px;font-size:8.6px;font-weight:bold;transform-origin:0 50%;transform:scaleX(1.02);">To get and store background procedure, perform the</span>
<span class="t" style="left:484.39px;top:320.9px;font-size:8.6px;font-weight:bold;transform-origin:0 50%;transform:scaleX(0.98);">following actions:</span>
<span class="t" style="left:484.8px;top:337.2px;font-size:8.6px;font-weight:bold;transform-origin:0 50%;transform:scaleX(0.98);">1. Close or turn off the signal source.</span>
<span class="t" style="left:484.8px;top:351px;font-size:8.6px;font-weight:bold;transform-origin:0 50%;transform:scaleX(0.98);">2. Click on the button "Scan background".</span>
<div class="btn" style="left:512.3px;top:370.3px;width:110px;height:14.3px;"></div>
<span class="t" style="left:530.48px;top:372.6px;font-size:8.8px;font-weight:bold;transform-origin:0 50%;transform:scaleX(0.99);">Scan background</span>
<span class="t" style="left:490.47px;top:400.2px;font-size:8.6px;font-weight:bold;transform-origin:0 50%;transform:scaleX(1.02);">To activate background subtraction</span>
<span class="t" style="left:490.49px;top:409.6px;font-size:8.6px;font-weight:bold;transform-origin:0 50%;transform:scaleX(1);">on scanning, set the check-box</span>
<span class="t" style="left:490.5px;top:419.5px;font-size:8.6px;font-weight:bold;transform-origin:0 50%;transform:scaleX(0.97);">"Subtraction on scanning".</span>
<div class="chk" style="left:508px;top:436.2px;width:7.5px;height:8px;"></div>
<span class="t" style="left:519.59px;top:434.6px;font-size:8.6px;font-weight:bold;transform-origin:0 50%;transform:scaleX(0.99);">Subtraction on scanning</span>

</body>
</html>
